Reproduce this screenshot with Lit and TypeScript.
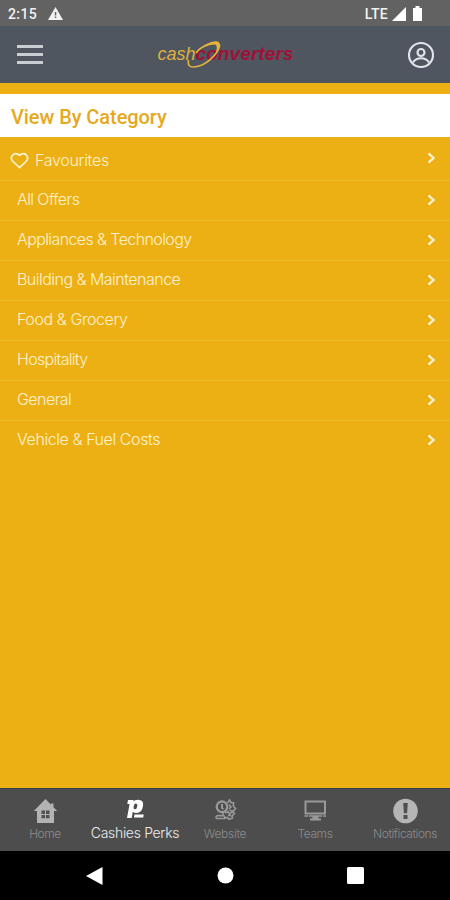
import { LitElement, html, css, svg } from "lit";
import { customElement } from "lit/decorators.js";

const categories = [
  { name: "All Offers", tracking: -0.6 },
  { name: "Appliances & Technology", tracking: -0.6 },
  { name: "Building & Maintenance", tracking: -0.52 },
  { name: "Food & Grocery", tracking: -0.42 },
  { name: "Hospitality", tracking: -0.7 },
  { name: "General", tracking: -0.55 },
  { name: "Vehicle & Fuel Costs", tracking: -0.42 },
];

const chevron = html`<svg class="chevron" width="9" height="12" viewBox="0 0 9 12">
  <path d="M1.500 1.300 6.500 6 1.500 10.700" fill="none" stroke="#fff3d2" stroke-width="2.300" />
</svg>`;

const icons = {
  home: svg`<path fill="#b3b3b3" d="M14.500 1 2.800 13H6v12h17V13h3.200L22.500 9.300V5.500H20v1.300z"/>
    <path fill="#505050" d="M10.500 12.500h3.500v3.500h-3.500zM15 12.500h3.500v3.500H15zM10.500 17h3.500v3.300h-3.500zM15 17h3.500v3.300H15z"/>`,
  perks: svg`<path fill="#fff" fill-rule="evenodd" d="M7 2h5.500l-.3 1.300Q13.800 1.700 17 1.700q6 0 5 6.300-1 7-6.500 7-2.500 0-3.700-1.200L10.700 20H6L8.600 6H6.300zM14.500 5.500q-1.300 0-1.800 3-.5 2.800 1.200 2.800 1.900 0 2.400-3 .4-2.800-1.800-2.800z"/>
    <path fill="#fff" d="M13.500 16.500h9.200l-.5 3h-9.200z"/>`,
  website: svg`<g fill="none" stroke="#999" stroke-width="1.600">
    <circle cx="11" cy="8.800" r="5.300" stroke-width="2.300"/><path d="M11 6V10l1.500 1" stroke-width="2"/>
    <path d="M16.500 5l2-3 1.500 2.500 2.700.5-.5 3 2.300 2.500-2 2.500-4-.5M18 6.500l2 2.500-2 2M12 14.500v2.500M5.500 20.500q-1.500-2.500 1.500-3l5.500.3q2 .5 1 2.700zM14 15l3-1.500 1.500 2.500 3-2.500 2 2-2.500 2.500.5 2-3.500 1.400-1.500-2-3 1M17 17.500h3"/></g>`,
  teams: svg`<rect x="4.500" y="3.500" width="19.500" height="12" fill="none" stroke="#999" stroke-width="2"/>
    <path fill="#999" d="M8 17.200h13v1.500H8zM3.500 17.200H7v1.500H3.500zM22 17.200h3v1.500h-3zM11.500 18.500h6v2H20v2H9v-2h2.500z"/>`,
  notifications: svg`<circle cx="14.500" cy="13" r="12.300" fill="#b5b5b5"/>
    <path fill="#505050" d="M12.200 5h4.600l-.7 10.200h-3.200zM12.500 17h4v4h-4z"/>`,
};

const tabs = [
  { label: "Home", icon: icons.home, name: "home" },
  { label: "Cashies Perks", icon: icons.perks, name: "perks" },
  { label: "Website", icon: icons.website, name: "website" },
  { label: "Teams", icon: icons.teams, name: "teams" },
  { label: "Notifications", icon: icons.notifications, name: "notifications" },
];

@customElement("app-root")
export class AppRoot extends LitElement {
  static styles = css`
    :host {
      display: flex;
      flex-direction: column;
      width: 450px;
      height: 900px;
      overflow: hidden;
      background: #ecb014;
      font-family: Inter, "Liberation Sans", sans-serif;
    }
    * { box-sizing: border-box; }
    svg { display: block; flex: none; }
    .status {
      height: 26px;
      flex: none;
      display: flex;
      align-items: center;
      padding: 1px 28px 0 8px;
      background: #626262;
      color: #f2f2f2;
      font: 500 14px Roboto, sans-serif;
      letter-spacing: 0.4px;
    }
    .warn { margin-left: 11px; }
    .lte { margin-left: auto; letter-spacing: 0.3px; }
    .signal { margin-left: 4px; }
    .battery { margin-left: 7px; }
    .bar {
      height: 57px;
      flex: none;
      display: flex;
      align-items: center;
      justify-content: space-between;
      padding: 0 15px 0 17px;
      background: #50565f;
    }
    .menu { width: 26px; display: grid; gap: 5px; margin-top: -1px; }
    .menu i { height: 3px; background: #c9ced3; }
    .title {
      height: 43px;
      flex: none;
      margin-top: 11px;
      padding: 2px 0 0 11px;
      display: flex;
      align-items: center;
      background: #fff;
      color: #e6a91d;
      font: 500 20px Roboto, sans-serif;
      letter-spacing: -0.07px;
    }
    .list { flex: 1; }
    .row {
      height: 40px;
      display: flex;
      align-items: center;
      padding: 0 14px 2px 17px;
      border-bottom: 1px solid #f0b935;
      color: #fff0cc;
      font-size: 16px;
      font-weight: 300;
    }
    .row:last-child { border-bottom-color: transparent; }
    .row .chevron { margin-left: auto; }
    .row span { margin-top: -1px; }
    .fav { height: 44px; padding: 4px 14px 0 10px; letter-spacing: -0.3px; }
    .fav .chevron { margin-top: -5px; }
    .heart { margin-right: 6px; margin-top: -1px; }
    .tabs {
      height: 63px;
      flex: none;
      display: grid;
      grid-template-columns: repeat(5, 90px);
      border-top: 1px solid #35404a;
      background: #4d4d4d;
    }
    .tab {
      display: flex;
      flex-direction: column;
      align-items: center;
      padding-top: 9px;
      color: #8c8c8c;
      font-size: 12px;
      font-weight: 300;
      letter-spacing: -0.45px;
      white-space: nowrap;
    }
    .tab span { line-height: 16px; margin-top: 1px; }
    .website { letter-spacing: -0.3px; }
    .perks { color: #ededed; font-size: 14px; letter-spacing: -0.32px; }
    .perks span { margin-top: 0; }
    .nav {
      height: 49px;
      flex: none;
      display: flex;
      align-items: center;
      justify-content: space-between;
      padding: 0 86px;
      background: #000;
    }
    .logo { font-family: "Liberation Sans", sans-serif; font-style: italic; }
  `;

  render() {
    return html`
      <div class="status">
        <span>2:15</span>
        <svg class="warn" width="15" height="13" viewBox="0 0 15 13"><path fill="#f2f2f2" d="M7.500 0 15 13H0z"/><path fill="#626262" d="M6.800 5h1.500v3.500H6.800zM6.800 9.500h1.500V11H6.800z"/></svg>
        <span class="lte">LTE</span>
        <svg class="signal" width="14" height="14" viewBox="0 0 14 14"><path fill="#fff" d="M14 0v14H0z"/></svg>
        <svg class="battery" width="9" height="15" viewBox="0 0 9 15"><path fill="#fff" d="M2.500 0h4v2H9v13H0V2h2.500z"/></svg>
      </div>
      <div class="bar">
        <div class="menu"><i></i><i></i><i></i></div>
        <svg class="logo" width="144" height="34" viewBox="0 0 144 34">
          <text x="4.500" y="22" font-size="19" fill="#dfb23d" textLength="38" lengthAdjust="spacingAndGlyphs">cash</text>
          <text x="42.500" y="22" font-size="17.500" font-weight="700" fill="#9e1238" textLength="98" lengthAdjust="spacingAndGlyphs">converters</text>
          <path fill="none" stroke="#e5b53b" stroke-width="1.600" d="M43 15C48 8 62 2 65.500 5 69 9 61 21 49 27 39 31 34 29 35.500 22"/>
          <path fill="#e5b53b" d="M49 10Q60 2.500 65 4q4.500 3-2.500 12 2.500-7 .3-9.200Q60 5.500 49 10z"/>
        </svg>
        <svg width="28" height="28" viewBox="0 0 28 28"><g fill="none" stroke="#e2e6eb" stroke-width="2.100"><circle cx="14" cy="14" r="12"/><circle cx="14" cy="11.500" r="3.500"/><path d="M6 21.500Q8.500 17.300 14 17.300T22 21.500"/></g></svg>
      </div>
      <div class="title">View By Category</div>
      <div class="list">
        <div class="row fav">
          <svg class="heart" width="19" height="17" viewBox="0 0 19 17"><path d="M9.500 15.500 3 9.500C-1 5.500 3.500-.3 8 2.300L9.500 3.500 11 2.300C15.500-.3 20 5.500 16 9.500z" fill="none" stroke="#fff3d6" stroke-width="1.700"/></svg>
          <span>Favourites</span>${chevron}
        </div>
        ${categories.map((c) => html`<div class="row"><span style="letter-spacing:${c.tracking}px">${c.name}</span>${chevron}</div>`)}
      </div>
      <div class="tabs">
        ${tabs.map((t) => html`<div class="tab ${t.name}">
          <svg width="28" height="27" viewBox="0 0 28 27">${t.icon}</svg><span>${t.label}</span>
        </div>`)}
      </div>
      <div class="nav">
        <svg width="17" height="18" viewBox="0 0 17 18"><path fill="#fff" d="M16.500 0v18L0 9z"/></svg>
        <svg width="17" height="17" viewBox="0 0 17 17"><circle cx="8.500" cy="8.500" r="8" fill="#fff"/></svg>
        <svg width="17" height="17" viewBox="0 0 17 17"><rect width="17" height="17" rx="1.500" fill="#fff"/></svg>
      </div>`;
  }
}
